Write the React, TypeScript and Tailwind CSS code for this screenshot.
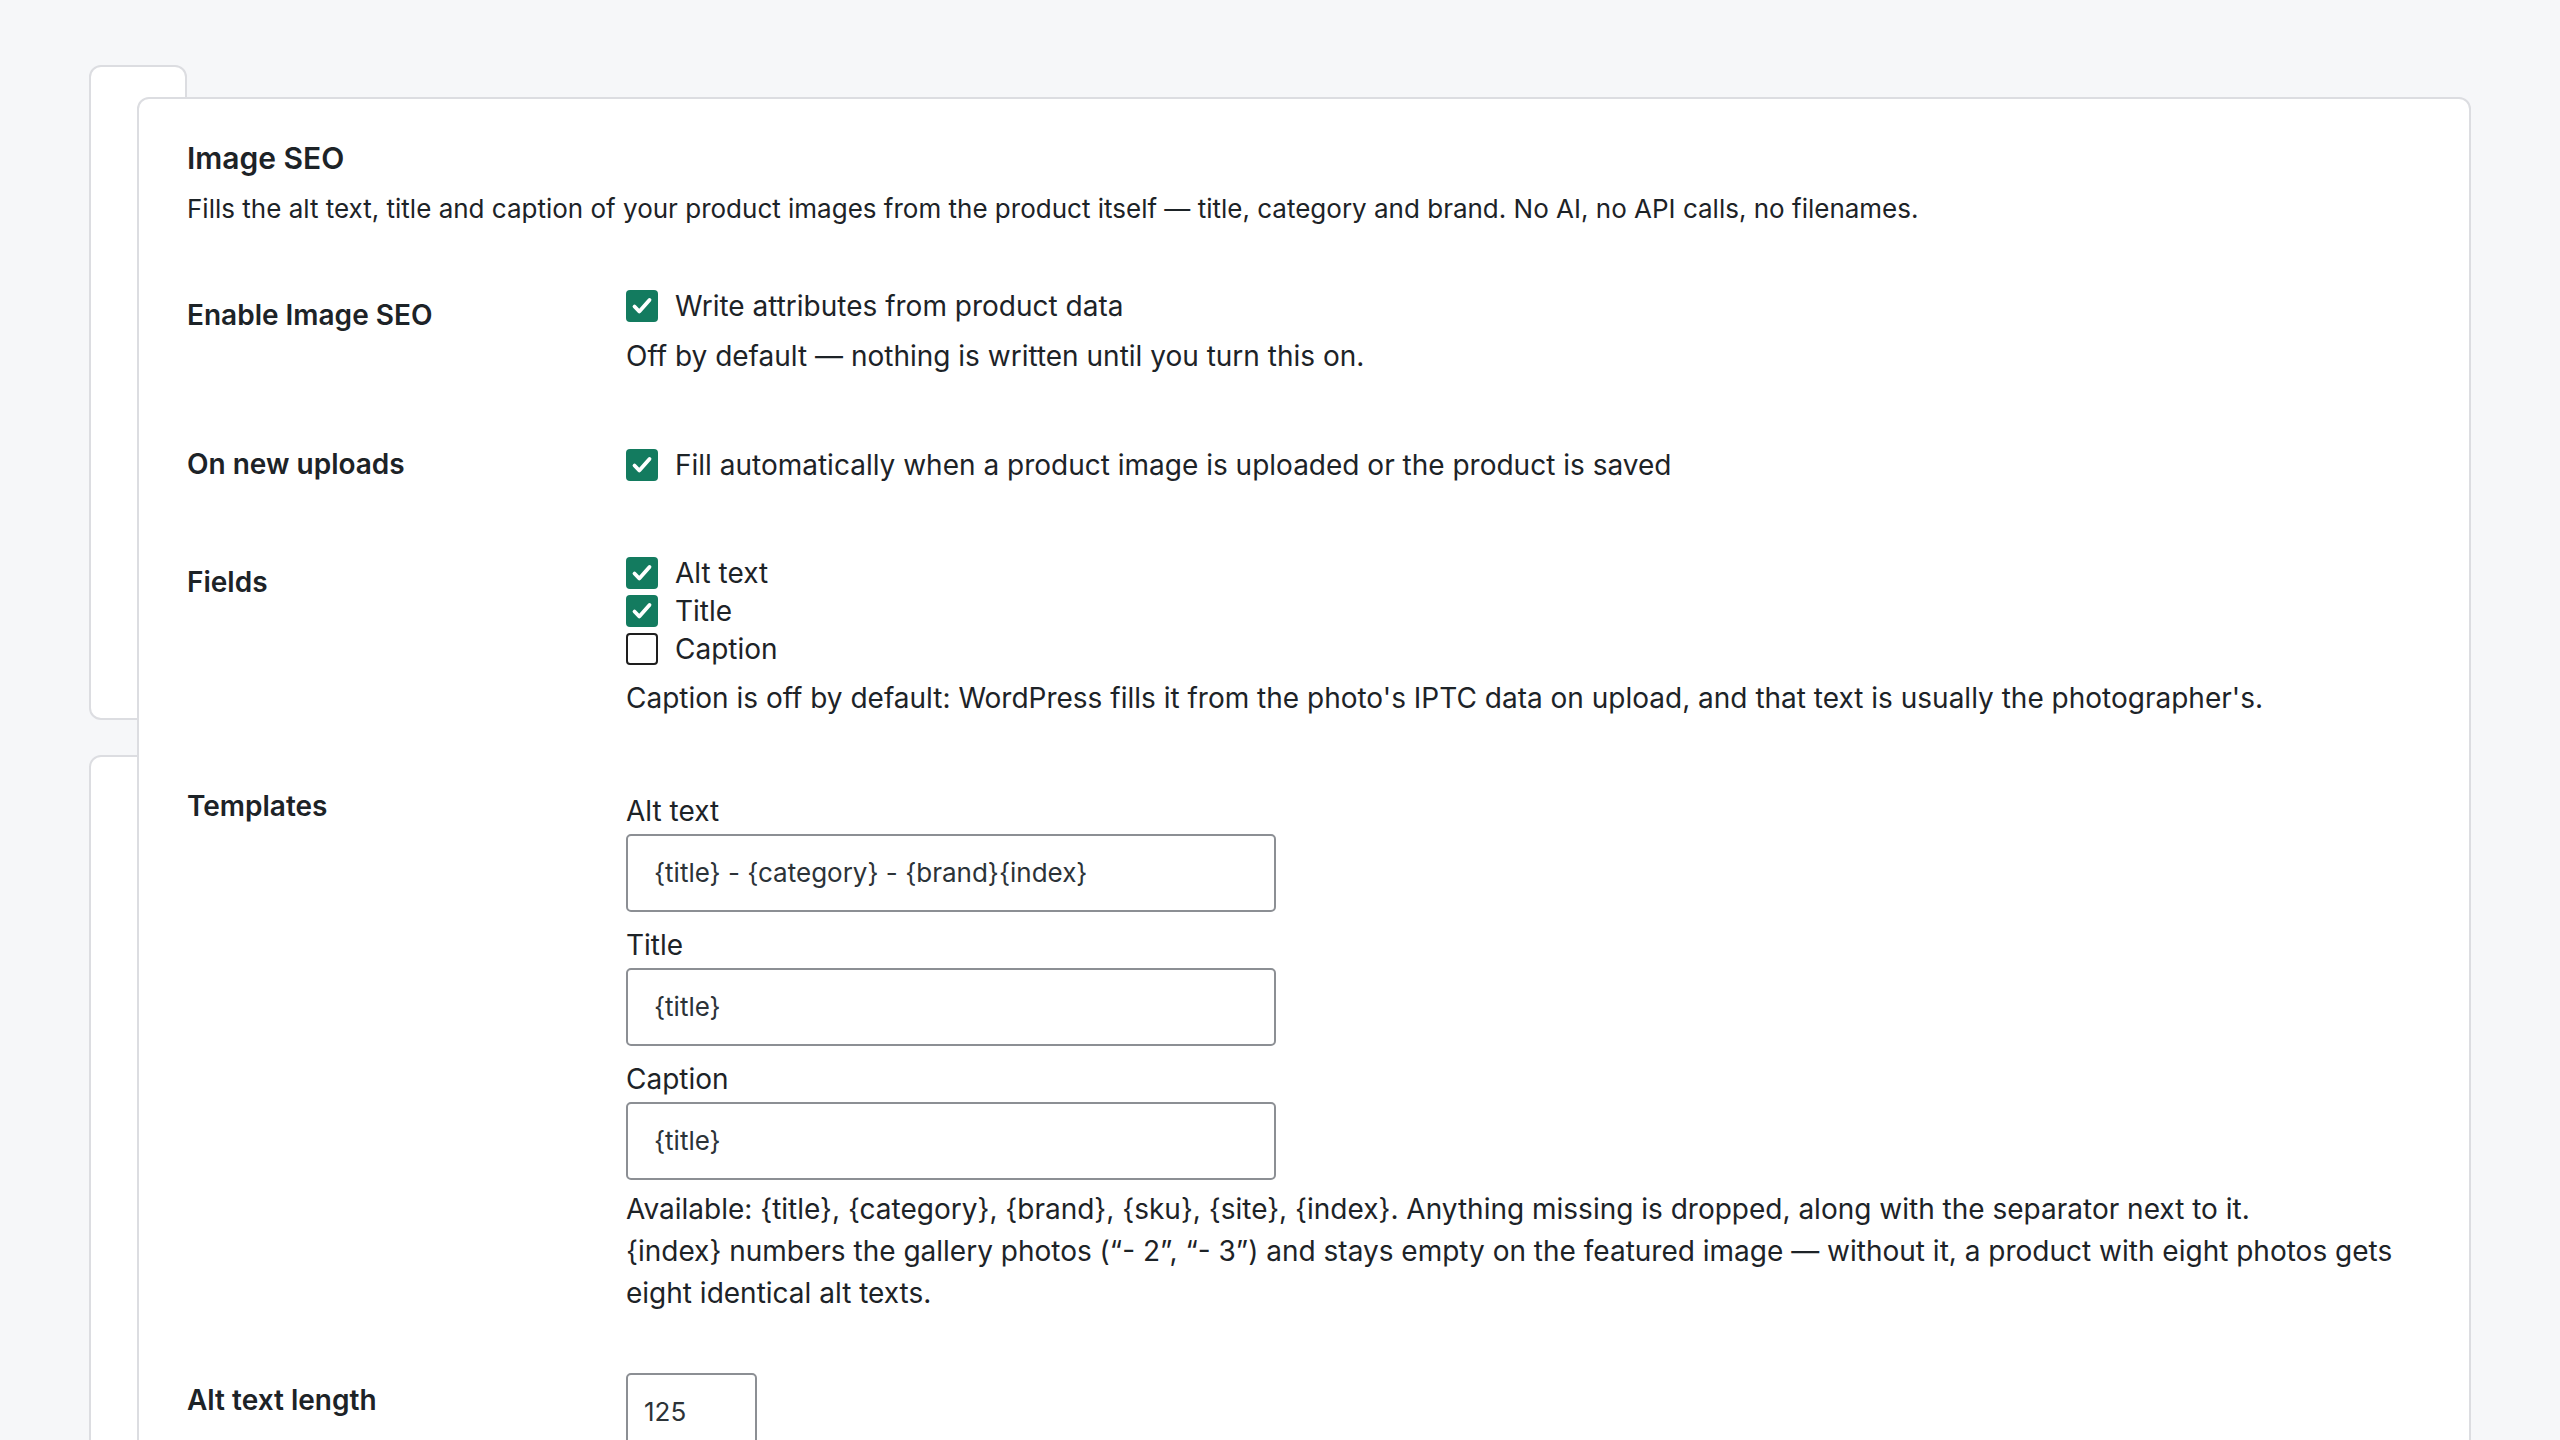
import React from "react";

const font = { fontFamily: "Inter, 'Noto Sans', sans-serif" };

function Box({ checked }: { checked: boolean }) {
  if (checked) {
    return (
      <span className="flex h-[32px] w-[32px] shrink-0 items-center justify-center rounded-[4px] bg-[#137b5f]">
        <svg width="24" height="24" viewBox="0 0 24 24" fill="none">
          <path d="M4.5 12.5l4.8 5L19.5 6" stroke="#ffffff" strokeWidth="3.8" strokeLinecap="round" strokeLinejoin="round" />
        </svg>
      </span>
    );
  }
  return <span className="block h-[32px] w-[32px] shrink-0 rounded-[4px] border-[2.5px] border-[#1e1e1e] bg-white" />;
}

function Check({ checked, label }: { checked: boolean; label: string }) {
  return (
    <div className="flex h-[38px] items-center gap-[17px]">
      <Box checked={checked} />
      <span>{label}</span>
    </div>
  );
}

function TextInput({ value, w, pl }: { value: string; w: string; pl: string }) {
  return (
    <div className={`${w} ${pl} flex h-[78px] items-center rounded-[5px] border-2 border-[#8c8f94] bg-white text-[26px] text-[#2c3338]`}>
      {value}
    </div>
  );
}

export default function App() {
  return (
    <div className="relative min-h-screen overflow-hidden bg-[#f6f7f9] text-[#1d2327]" style={font}>
      <div className="absolute left-[89px] top-[65px] h-[655px] w-[98px] rounded-[12px] border-2 border-[#dcdde1] bg-white" />
      <div className="absolute left-[89px] top-[755px] h-[900px] w-[98px] rounded-[12px] border-2 border-[#dcdde1] bg-white" />
      <div className="relative z-10 ml-[137px] pt-[97px]">
        <div className="h-[1500px] w-[2334px] rounded-[12px] border-2 border-[#dcdde1] bg-white pl-[48px] pr-[48px] pt-[41px]">
          <h2 className="text-[30px] font-semibold leading-[36px]">Image SEO</h2>
          <p className="mt-[12px] text-[26px] leading-[42px]">
            Fills the alt text, title and caption of your product images from the product itself — title, category and brand. No AI, no API calls, no filenames.
          </p>

          <div className="flex text-[28px] leading-[42px]">
            <div className="mt-[64px] w-[439px] shrink-0 font-semibold">Enable Image SEO</div>
            <div className="mt-[57px] flex-1">
              <Check checked label="Write attributes from product data" />
              <p className="mt-[10px]">Off by default — nothing is written until you turn this on.</p>
            </div>
          </div>

          <div className="flex text-[28px] leading-[42px]">
            <div className="mt-[66px] w-[439px] shrink-0 font-semibold">On new uploads</div>
            <div className="mt-[69px] flex-1">
              <Check checked label="Fill automatically when a product image is uploaded or the product is saved" />
            </div>
          </div>

          <div className="flex text-[28px] leading-[42px]">
            <div className="mt-[76px] w-[439px] shrink-0 font-semibold">Fields</div>
            <div className="mt-[69px] flex-1">
              <Check checked label="Alt text" />
              <Check checked label="Title" />
              <Check checked={false} label="Caption" />
              <p className="mt-[9px]">
                Caption is off by default: WordPress fills it from the photo's IPTC data on upload, and that text is usually the photographer's.
              </p>
            </div>
          </div>

          <div className="flex text-[28px] leading-[42px]">
            <div className="mt-[66px] w-[439px] shrink-0 font-semibold">Templates</div>
            <div className="mt-[71px] flex-1">
              <div>Alt text</div>
              <div className="mt-[2px]">
                <TextInput value="{title} - {category} - {brand}{index}" w="w-[650px]" pl="pl-[26px]" />
              </div>
              <div className="mt-[12px]">Title</div>
              <div className="mt-[2px]">
                <TextInput value="{title}" w="w-[650px]" pl="pl-[26px]" />
              </div>
              <div className="mt-[12px]">Caption</div>
              <div className="mt-[2px]">
                <TextInput value="{title}" w="w-[650px]" pl="pl-[26px]" />
              </div>
              <p className="mt-[8px]">
                Available: {"{title}"}, {"{category}"}, {"{brand}"}, {"{sku}"}, {"{site}"}, {"{index}"}. Anything missing is dropped, along with the separator next to it.
              </p>
              <p>
                {"{index}"} numbers the gallery photos (“- 2”, “- 3”) and stays empty on the featured image — without it, a product with eight photos gets eight identical alt texts.
              </p>
            </div>
          </div>

          <div className="flex text-[28px] leading-[42px]">
            <div className="mt-[65px] w-[439px] shrink-0 font-semibold">Alt text length</div>
            <div className="mt-[59px] flex-1">
              <TextInput value="125" w="w-[131px]" pl="pl-[16px]" />
            </div>
          </div>
        </div>
      </div>
    </div>
  );
}
